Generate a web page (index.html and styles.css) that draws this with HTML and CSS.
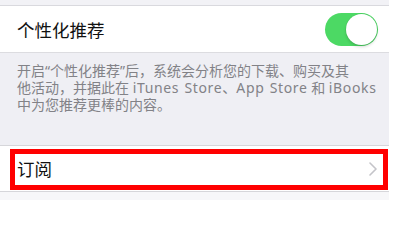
FILE: index.html
```html
<!DOCTYPE html>
<html lang="zh-CN">
<head>
<meta charset="utf-8">
<link rel="stylesheet" href="styles.css">
</head>
<body>
<div class="page">
  <div class="top-gap"></div>
  <div class="cell">
    <span class="cell-title">个性化推荐</span>
    <span class="switch"><span class="knob"></span></span>
  </div>
  <div class="footer">
    <p class="footer-line">开启“个性化推荐”后，系统会分析您的下载、购买及其</p>
    <p class="footer-line">他活动，并据此在 <span class="latin">iTunes Store</span>、<span class="latin">App Store</span> 和 <span class="latin">iBooks</span></p>
    <p class="footer-line">中为您推荐更棒的内容。</p>
  </div>
  <div class="cell cell-link">
    <span class="cell-title">订阅</span>
    <svg class="chevron" width="8" height="14" viewBox="0 0 8 14"><path d="M1 1 L7 7 L1 13" fill="none" stroke="#c4c4c9" stroke-width="1.6" stroke-linecap="round" stroke-linejoin="round"/></svg>
    <span class="highlight"></span>
  </div>
  <div class="bottom"></div>
</div>
</body>
</html>
```

FILE: styles.css
```css
html, body {
  margin: 0;
  padding: 0;
  background: #ffffff;
}
body {
  font-family: "Noto Sans", "Noto Sans CJK SC", sans-serif;
}
.page {
  width: 389px;
  height: 200px;
  background: #efeff4;
  display: flex;
  flex-direction: column;
}
.top-gap {
  height: 5px;
  border-bottom: 1px solid #d9d9de;
  background: #f2f2f6;
}
.cell {
  height: 46px;
  background: #ffffff;
  display: flex;
  align-items: center;
  justify-content: space-between;
  padding: 0 11px 0 17px;
  box-sizing: border-box;
  position: relative;
}
.cell-title {
  font-size: 17.5px;
  color: #111111;
  font-family: "Noto Sans CJK SC", sans-serif;
}
.switch {
  width: 53px;
  height: 33px;
  border-radius: 17px;
  background: #4cd964;
  position: relative;
  display: block;
}
.knob {
  position: absolute;
  right: 1px;
  top: 1px;
  width: 31px;
  height: 31px;
  border-radius: 50%;
  background: #ffffff;
  box-shadow: 0 0 0 0.5px rgba(0,0,0,0.08), 0 2px 3px rgba(0,0,0,0.15);
}
.footer {
  height: 93px;
  border-top: 1px solid #dcdce0;
  box-sizing: border-box;
  padding: 9px 10px 0 17px;
  display: flex;
  flex-direction: column;
}
.footer-line {
  margin: 0;
  height: 17px;
  font-size: 14px;
  line-height: 17px;
  color: #828287;
  white-space: nowrap;
}
.latin {
  letter-spacing: 0.65px;
  word-spacing: 1px;
}
.cell-link {
  border-top: 1px solid #d6d6da;
  border-bottom: 1px solid #d6d6da;
  height: 47px;
  padding-right: 12px;
}
.chevron {
  display: block;
}
.highlight {
  position: absolute;
  left: 10px;
  top: 3px;
  width: 378px;
  height: 41px;
  border: 5px solid #ff0000;
  box-sizing: border-box;
}
.bottom {
  flex: 1;
  background: #f7f7f9;
}
```
